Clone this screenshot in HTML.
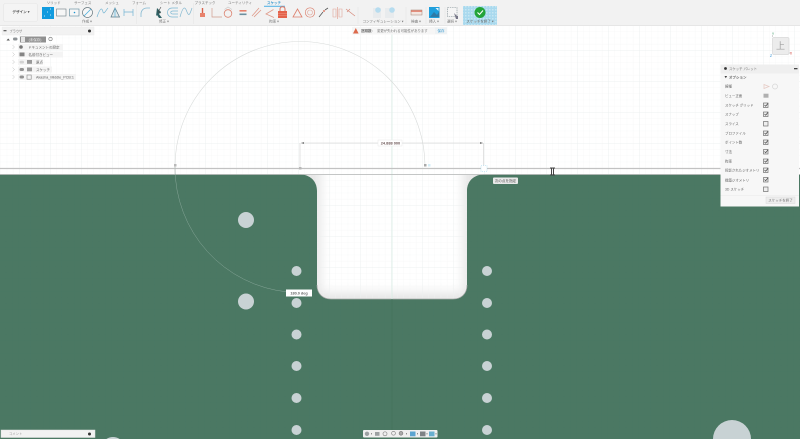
<!DOCTYPE html>
<html lang="ja"><head><meta charset="utf-8"><style>
html,body{margin:0;padding:0;width:800px;height:439px;overflow:hidden;background:#fff}
svg{position:absolute;left:0;top:0;display:block}
text{font-family:"Liberation Sans","Noto Sans CJK JP",sans-serif}
</style></head><body>
<svg width="800" height="439" viewBox="0 0 800 439" xmlns="http://www.w3.org/2000/svg">
<defs>
<pattern id="g" width="6.2" height="6.2" patternUnits="userSpaceOnUse" patternTransform="translate(1 1)"><path d="M6.2 0V6.2H0" fill="none" stroke="#f1f3f3" stroke-width=".5"/></pattern>
<pattern id="g2" width="31" height="31" patternUnits="userSpaceOnUse" patternTransform="translate(20 20)"><path d="M31 0V31H0" fill="none" stroke="#e8eced" stroke-width=".5"/></pattern>
<pattern id="gd" width="6.2" height="6.2" patternUnits="userSpaceOnUse"><path d="M6.2 0V6.2H0" fill="none" stroke="#497663" stroke-width=".5"/></pattern>
<pattern id="dots" width="3" height="3" patternUnits="userSpaceOnUse"><rect width="3" height="3" fill="#a9d9ee"/><rect width="1.5" height="1.5" fill="#c7e7f3"/></pattern>
<filter id="bl" x="-30%" y="-30%" width="160%" height="160%"><feGaussianBlur stdDeviation="5"/></filter>
</defs>
<!-- canvas -->
<rect width="800" height="439" fill="#fff"/>
<!-- cutout shading -->
<rect x="298" y="175" width="188" height="125" fill="#e6e6e6"/>
<rect x="321" y="150" width="142" height="142" fill="#fff" filter="url(#bl)"/>
<rect y="25" width="800" height="414" fill="url(#g)"/>
<rect y="25" width="800" height="414" fill="url(#g2)"/>
<!-- green board -->
<path d="M0 174.500H300C310 174.500 317 181 317 191V285C317 294 323 299 331 299H453C461 299 467 294 467 285V191C467 181 474 174.500 484 174.500H800V439H0Z" fill="#4b7863"/>
<path d="M0 174.500H300C310 174.500 317 181 317 191V285C317 294 323 299 331 299H453C461 299 467 294 467 285V191C467 181 474 174.500 484 174.500H800V439H0Z" fill="url(#gd)"/>
<path d="M317 285C317 294 323 299 331 299H453C461 299 467 294 467 285" fill="none" stroke="#a8aaa9" stroke-width=".7"/>
<!-- holes -->
<g fill="#c8d2d4">
<circle cx="246" cy="220" r="8"/><circle cx="246" cy="301.500" r="8"/>
<circle cx="296.500" cy="271" r="5"/><circle cx="296.500" cy="303" r="5"/><circle cx="296.500" cy="334.500" r="5"/><circle cx="296.500" cy="366" r="5"/><circle cx="296.500" cy="398" r="5"/><circle cx="296.500" cy="430" r="5"/>
<circle cx="487" cy="271" r="5"/><circle cx="487" cy="303" r="5"/><circle cx="487" cy="334.500" r="5"/><circle cx="487" cy="366" r="5"/><circle cx="487" cy="398" r="5"/><circle cx="487" cy="430" r="5"/>
<path d="M713 439A19 19 0 0 1 751 439Z"/><path d="M106.400 439A12 12 0 0 1 119.600 439Z"/>
</g>
<!-- sketch lines -->
<path d="M392 26V299" stroke="#d6ece3" stroke-width=".7"/>
<path d="M392 299V439" stroke="#447159" stroke-width=".6"/>
<path d="M0 168.500H800" stroke="#c2c2c2" stroke-width="1.300"/>
<path d="M0 174.500H800" stroke="#b3b6b5" stroke-width=".7"/>
<path d="M425 166A125 125 0 0 0 175 167" fill="none" stroke="#d8dbda" stroke-width=".6"/>
<path d="M175 167A125 125 0 0 0 288 292" fill="none" stroke="#86a698" stroke-width=".5"/>
<path d="M175 165V174" stroke="#c5c5c5" stroke-width=".6"/>
<rect x="174" y="164" width="2.500" height="2.500" fill="#b9b9b9"/>
<path d="M300 143V168M483.500 143V168M301 143H483" stroke="#d0d0d0" stroke-width=".6" fill="none"/>
<path d="M301 143l3-1v2zM483 143l-3-1v2z" fill="#777"/>
<rect x="299" y="167" width="2.500" height="2.500" fill="#b8b8b8"/>
<rect x="424" y="164" width="2.500" height="2.500" fill="#aaa"/><rect x="428" y="164" width="2.500" height="2.500" fill="#d5eef7"/>
<rect x="481" y="165.500" width="6" height="6" fill="#fff" stroke="#9fd8ef" stroke-width=".6" stroke-dasharray="1 1"/>
<rect x="378" y="140" width="24" height="6" fill="#fff" stroke="#e8e8e8" stroke-width=".5"/>
<text x="390.500" y="144.500" font-size="3.900" font-weight="bold" text-anchor="middle" fill="#6b5555">24.888 000</text>
<!-- cursor -->
<path d="M550 168h5M550 175h5M551.500 168v7M553.500 168v7" stroke="#444" stroke-width="1" fill="none"/>
<!-- tooltips -->
<rect x="493" y="177.500" width="25" height="6.500" rx="1" fill="#e9e9e9"/>
<text x="505.500" y="182.200" font-size="3.600" text-anchor="middle" fill="#555">次の点を指定</text>
<rect x="286" y="289.500" width="26" height="7" fill="#fff"/>
<text x="299" y="294.500" font-size="3.800" font-weight="bold" text-anchor="middle" fill="#666">180.0 deg</text>
<!-- toolbar -->
<rect width="800" height="25" fill="#f2f2f2"/>
<path d="M0 25.500H800" stroke="#e6e6e6"/>
<rect x="3.500" y="3.500" width="34" height="18" rx="2" fill="#f4f4f4" stroke="#e4e4e4" stroke-width=".6"/>
<text x="21" y="13" font-size="3.600" font-weight="bold" text-anchor="middle" fill="#555">デザイン ▾</text>
<g font-size="3.500" fill="#777" text-anchor="middle">
<text x="53.700" y="3.800">ソリッド</text><text x="82.700" y="3.800">サーフェス</text><text x="112" y="3.800">メッシュ</text><text x="139" y="3.800">フォーム</text><text x="171" y="3.800">シート メタル</text><text x="205" y="3.800">プラスチック</text><text x="240" y="3.800">ユーティリティ</text>
<text x="87" y="22.300">作成 ▾</text><text x="164" y="22.300">修正 ▾</text><text x="274" y="22.300">拘束 ▾</text><text x="383" y="22.300">コンフィギュレーション ▾</text><text x="416" y="22.300">検査 ▾</text><text x="434" y="22.300">挿入 ▾</text><text x="452" y="22.300">選択 ▾</text>
</g>
<text x="274" y="4" font-size="3.500" font-weight="bold" text-anchor="middle" fill="#3a9ad0">スケッチ</text>
<path d="M264 6.300H285" stroke="#5cb6e6" stroke-width="1.100"/>
<path d="M136.500 3V24M193.500 3V24M358 7V24M406 7V24M426 7V24M445 7V24" stroke="#e6e6e6" stroke-width=".6"/>
<!-- create icons -->
<rect x="42" y="7" width="12" height="12" fill="#119bdf"/>
<path d="M50 9h1M47 12h1M50 15h1M44 16h1" stroke="#bfe6f7"/>
<rect x="56.500" y="9" width="9.500" height="7" fill="#f6f6f6" stroke="#6f7d84" stroke-width=".6"/>
<rect x="69.500" y="9" width="9.500" height="7" fill="#f6f6f6" stroke="#5a8699" stroke-width=".6"/><circle cx="74.500" cy="12.500" r=".8" fill="#1c95d0"/>
<circle cx="87.500" cy="12.500" r="5" fill="#f6f6f6" stroke="#66767d" stroke-width=".7"/><path d="M84 16L91 9" stroke="#4aaedd" stroke-width=".8"/>
<path d="M97 17C100 8 102 7 103 12C104 15 106 10 108 8" fill="none" stroke="#78b7d4" stroke-width=".7"/>
<path d="M111 17L115 8L119.500 17Z" fill="#e3e8ea" stroke="#587a89" stroke-width=".7"/><path d="M115 8V17" stroke="#55b5df" stroke-width=".7"/>
<path d="M124 9V16M133 9V16M124 12H133" stroke="#73b4d3" stroke-width=".7" fill="none"/>
<!-- modify icons -->
<path d="M141 17V14C141 11 143 8 147 8H150" fill="none" stroke="#83b8d1" stroke-width=".8"/>
<path d="M157 8l4 4-2 2 3 4-3 0-2-3-1 1z" fill="#2f6063"/>
<path d="M161 7l-3 5 3 1" stroke="#444" stroke-width=".6" fill="none"/>
<path d="M178 8H172C166 8 166 17 172 17H178M178 11H173C170 11 170 14 173 14H178" fill="none" stroke="#7bb6d2" stroke-width=".7"/>
<path d="M180 17C183 6 185 6 187 12C189 17 190 14 192 8" fill="none" stroke="#84b8d0" stroke-width=".7"/>
<!-- constraints -->
<path d="M202.500 8V13" stroke="#d8604a" stroke-width="1.400"/><rect x="200" y="13" width="5" height="4" fill="#e8826c"/>
<path d="M212 8V17H222" fill="none" stroke="#d09c8f" stroke-width=".7"/>
<circle cx="228" cy="13.500" r="3.800" fill="none" stroke="#dc8471" stroke-width=".8"/><path d="M224.500 9.500L228 7L232 9.500" stroke="#c6c6c6" stroke-width=".6" fill="none"/>
<rect x="239.500" y="10" width="7" height="1.600" fill="#e6806b"/><rect x="239.500" y="13.500" width="7" height="1.600" fill="#6c8f9e"/>
<path d="M252 16L259 8M254 17L261 10" stroke="#df9a8a" stroke-width=".8"/>
<path d="M273.500 9.500L266 14L274 17.500" fill="none" stroke="#df9a8a" stroke-width=".8"/>
<path d="M280 11V9C280 6 285 6 285 9V11" fill="none" stroke="#de735d" stroke-width="1"/><rect x="278" y="11" width="9" height="7" fill="#e4634b"/><path d="M278 13.500H287M278 15.500H287" stroke="#f0a898" stroke-width=".4"/>
<path d="M293 17L297.500 9L302 17Z" fill="none" stroke="#dc7f6c" stroke-width=".8"/>
<circle cx="310" cy="12.500" r="4.700" fill="none" stroke="#dc8471" stroke-width=".7"/><circle cx="310" cy="12.500" r="2.500" fill="none" stroke="#e0a699" stroke-width=".6"/>
<path d="M319 17L323 12M325 10L328 8" stroke="#555" stroke-width=".8"/><circle cx="324" cy="11" r="1" fill="#dc7f6c"/>
<path d="M333 9H336V17H333ZM339 9H342V17H339Z" fill="none" stroke="#e0a699" stroke-width=".6"/><path d="M337.500 7V19" stroke="#dc8471" stroke-width=".5"/>
<path d="M346 9L355 16M350 9L347 12" stroke="#d6897a" stroke-width=".7" fill="none"/>
<!-- config -->
<rect x="373" y="8" width="8" height="10" fill="#e8ebed"/><rect x="385" y="8" width="9" height="10" fill="#e8ebed"/>
<circle cx="378" cy="10" r="2.800" fill="#b6dcef"/><circle cx="392" cy="10" r="2.800" fill="#b6dcef"/>
<!-- inspect/insert/select -->
<rect x="411" y="10" width="11" height="5" fill="#f3e6e0" stroke="#a08275" stroke-width=".5"/><rect x="411" y="10.500" width="11" height="1.200" fill="#de6a54"/>
<rect x="429" y="7" width="10.500" height="11" fill="#1f9fdc"/><path d="M430 17L434 12L437 15L439.500 11V17Z" fill="#2f7aa6"/><path d="M435.500 8h3v3z" fill="#eaf6fb"/>
<rect x="447.500" y="7.500" width="9.500" height="9" fill="#f5f5f5" stroke="#7e8c91" stroke-width=".6" stroke-dasharray="1.500 .8"/><path d="M454 13l3 3 1 0 0 3-2 0z" fill="#778"/>
<!-- finish -->
<rect x="463" y="6" width="34" height="19" fill="url(#dots)"/>
<circle cx="480" cy="12.500" r="5.500" fill="#23a43a"/><path d="M477.500 12.500L479.500 14.500L483 10.500" fill="none" stroke="#fff" stroke-width="1.100"/>
<text x="480" y="22.300" font-size="3.500" text-anchor="middle" fill="#666">スケッチを終了 ▾</text>
<!-- warning bar -->
<rect x="352" y="27" width="95" height="7.500" fill="#f6f6f6"/>
<path d="M353 33.500L355.800 28L358.600 33.500Z" fill="#dc6a4c"/>
<text x="361" y="32" font-size="3.500" font-weight="bold" fill="#666">逐順数:</text>
<text x="377" y="32" font-size="3.400" fill="#777">変更が失われる可能性があります</text>
<rect x="435" y="27.500" width="12" height="6.500" fill="#eef2f4"/>
<text x="441" y="32" font-size="3.500" text-anchor="middle" fill="#3a9ad0">保存</text>
<!-- browser -->
<rect x="2" y="27" width="92" height="8" fill="#f2f2f2" stroke="#ebebeb" stroke-width=".5"/>
<rect x="3.500" y="30" width="3" height="1.300" fill="#666"/>
<text x="9.500" y="32.500" font-size="3.200" fill="#777">ブラウザ</text>
<circle cx="89.500" cy="31" r="1.500" fill="#333"/>
<path d="M6.500 40.500l1.700-2 1.700 2z" fill="#555"/>
<rect x="13" y="37.500" width="4.500" height="3" rx="1.500" fill="#8e9396"/>
<rect x="20" y="36.500" width="26" height="6" fill="#909090"/>
<rect x="21" y="37" width="4" height="5" fill="#e4e4e4"/>
<text x="35" y="41" font-size="3.500" fill="#eee" text-anchor="middle">(未保存)</text>
<circle cx="50.500" cy="39" r="1.700" fill="none" stroke="#777" stroke-width=".6"/>
<path d="M12.500 45l2 2-2 2M12.500 52.500l2 2-2 2M12.500 60l2 2-2 2M12.500 67.500l2 2-2 2M12.500 75l2 2-2 2" fill="none" stroke="#c0c0c0" stroke-width=".5"/>
<g fill="#f4f4f4"><rect x="18" y="44" width="45" height="6"/><rect x="18" y="51.500" width="45" height="6"/><rect x="18" y="59" width="25" height="6"/><rect x="18" y="66.500" width="34" height="6"/><rect x="18" y="74" width="58" height="6"/></g>
<circle cx="21" cy="47" r="1.800" fill="#777"/>
<rect x="19.500" y="52.500" width="5" height="3.800" fill="#858585"/>
<rect x="19.500" y="60.700" width="4.500" height="2.800" rx="1.400" fill="#d2d2d2"/><rect x="27" y="60" width="5" height="3.800" fill="#999"/>
<rect x="19.500" y="68" width="4.500" height="3" rx="1.500" fill="#929292"/><rect x="27" y="67.500" width="5" height="3.800" fill="#999"/>
<rect x="19.500" y="75.500" width="4.500" height="3" rx="1.500" fill="#929292"/><rect x="27" y="75" width="4.200" height="4.200" fill="none" stroke="#888" stroke-width=".6"/>
<g font-size="3.500" fill="#666">
<text x="28" y="48.300">ドキュメントの設定</text><text x="28.500" y="55.800">名前付きビュー</text><text x="36" y="63.300">原点</text><text x="36" y="70.800">スケッチ</text><text x="36" y="78.300" font-size="3.700">Akasha_Middle_PCB:1</text>
</g>
<!-- viewcube -->
<rect x="772.500" y="37.500" width="16.500" height="17" rx="1.500" fill="#ececec" stroke="#d8d8d8" stroke-width=".7"/>
<text x="780.500" y="49" font-size="9" text-anchor="middle" fill="#a0a0a0">上</text>
<path d="M772.500 35V37M772 54.500L771 55.500M789 53L790.500 53" stroke="#aaa" stroke-width=".5"/>
<text x="773" y="35" font-size="3.500" text-anchor="middle" fill="#3d9a6b">Y</text>
<text x="771" y="57" font-size="3.500" text-anchor="middle" fill="#2b8fd9">Z</text>
<text x="791" y="54.500" font-size="3.500" text-anchor="middle" fill="#d9433c">X</text>
<!-- palette -->
<rect x="720.500" y="64.500" width="78.500" height="142" fill="#f7f7f7"/>
<rect x="720.500" y="64.500" width="78.500" height="9" fill="#efefef"/>
<circle cx="725.500" cy="68.500" r="1.400" fill="#333"/>
<text x="729" y="70" font-size="3.400" fill="#777">スケッチ パレット</text>
<rect x="794" y="68" width="3.500" height="1.300" fill="#444"/>
<path d="M724.500 76h2.600l-1.300 2.200z" fill="#444"/>
<text x="729" y="78.600" font-size="3.500" font-weight="bold" fill="#666">オプション</text>
<g font-size="3.450" fill="#666">
<text x="725" y="87.500">線種</text><text x="725" y="97">ビュー正面</text><text x="725" y="106.300">スケッチ グリッド</text><text x="725" y="115.400">スナップ</text><text x="725" y="125">スライス</text><text x="725" y="134.300">プロファイル</text><text x="725" y="143.400">ポイント数</text><text x="725" y="153">寸法</text><text x="725" y="162.300">拘束</text><text x="725" y="171.400">投影されたジオメトリ</text><text x="725" y="181.300">構築ジオメトリ</text><text x="725" y="190.300">3D スケッチ</text>
</g>
<path d="M769 86.500L764 84.500V88.500Z" stroke="#e6cbc5" stroke-width=".8" fill="none"/>
<circle cx="775" cy="86.500" r="2.500" fill="none" stroke="#d6d6d6" stroke-width=".7"/>
<rect x="763.500" y="93.700" width="5" height="4" fill="#b0b0b0"/>
<g fill="#eee" stroke="#707070" stroke-width=".7">
<rect x="763.500" y="103" width="4.500" height="4.500"/><rect x="763.500" y="112" width="4.500" height="4.500"/><rect x="763.500" y="121.500" width="4.500" height="4.500"/><rect x="763.500" y="131" width="4.500" height="4.500"/><rect x="763.500" y="140" width="4.500" height="4.500"/><rect x="763.500" y="149.500" width="4.500" height="4.500"/><rect x="763.500" y="159" width="4.500" height="4.500"/><rect x="763.500" y="168" width="4.500" height="4.500"/><rect x="763.500" y="177.500" width="4.500" height="4.500"/><rect x="763.500" y="187" width="4.500" height="4.500"/>
</g>
<path d="M764.500 105l1.200 1.200 2.400-3M764.500 114l1.200 1.200 2.400-3M764.500 133l1.200 1.200 2.400-3M764.500 142l1.200 1.200 2.400-3M764.500 151.500l1.200 1.200 2.400-3M764.500 161l1.200 1.200 2.400-3M764.500 170l1.200 1.200 2.400-3M764.500 179.500l1.200 1.200 2.400-3" fill="none" stroke="#444" stroke-width=".7"/>
<path d="M720.500 195.500H799" stroke="#e8e8e8" stroke-width=".5"/>
<rect x="766" y="197" width="29" height="6.500" fill="#ededed" stroke="#dadada" stroke-width=".5"/>
<text x="780.500" y="201.700" font-size="3.500" text-anchor="middle" fill="#777">スケッチを終了</text>
<!-- comment -->
<rect x="1" y="430" width="94" height="7.500" fill="#f2f2f2" stroke="#e4e4e4" stroke-width=".5"/>
<text x="9" y="435" font-size="3.300" fill="#999">コメント</text>
<circle cx="89.500" cy="434" r="1.500" fill="#333"/>
<!-- nav bar -->
<rect x="363" y="430" width="74.500" height="7.500" rx="1" fill="#efefef"/>
<g fill="#9ca0a2">
<circle cx="367" cy="433.800" r="2.200"/><rect x="371" y="433.300" width="1" height="1" fill="#666"/>
<rect x="375" y="432" width="4.500" height="3.800"/>
<circle cx="385" cy="433.800" r="2" fill="none" stroke="#8a8a8a" stroke-width=".7"/>
<circle cx="393.500" cy="433.300" r="1.900" fill="none" stroke="#8a8a8a" stroke-width=".7"/>
<circle cx="401" cy="433.300" r="1.900" fill="#aaa" stroke="#7a7a7a" stroke-width=".6"/><rect x="406" y="433.300" width="1" height="1" fill="#666"/>
<rect x="410" y="431.500" width="5.500" height="4.800" fill="#5aa4d0"/><rect x="417" y="433.300" width="1" height="1" fill="#666"/>
<rect x="420" y="431.500" width="5.500" height="4.800" fill="#7d8285"/><rect x="426.500" y="433.300" width="1" height="1" fill="#666"/>
<rect x="429" y="431.500" width="5.500" height="4.800" fill="#68afcf"/><rect x="435.500" y="433.300" width="1" height="1" fill="#666"/>
</g>
</svg>
</body></html>
